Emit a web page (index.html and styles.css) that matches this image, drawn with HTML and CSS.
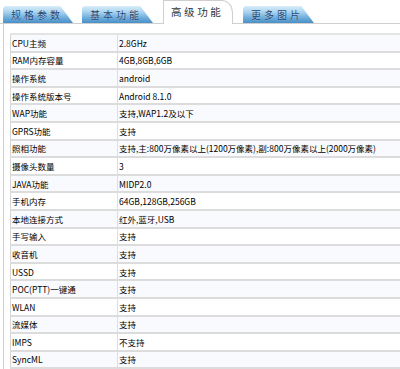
FILE: index.html
```html
<!DOCTYPE html>
<html lang="zh-CN">
<head>
<meta charset="utf-8">
<title>高级功能</title>
<link rel="stylesheet" href="styles.css">
</head>
<body>
<div class="tabs">
  <div class="tab tab-blue tab-w1">规格参数</div>
  <div class="tab tab-blue tab-w2">基本功能</div>
  <div class="tab tab-active">高级功能</div>
  <div class="tab tab-blue tab-w4">更多图片</div>
</div>
<div class="panel">
  <table class="spec">
    <tr><td class="k">CPU主频</td><td>2.8GHz</td></tr>
    <tr><td class="k">RAM内存容量</td><td>4GB,8GB,6GB</td></tr>
    <tr><td class="k">操作系统</td><td>android</td></tr>
    <tr><td class="k">操作系统版本号</td><td>Android 8.1.0</td></tr>
    <tr><td class="k">WAP功能</td><td>支持,WAP1.2及以下</td></tr>
    <tr><td class="k">GPRS功能</td><td>支持</td></tr>
    <tr><td class="k">照相功能</td><td>支持,主:800万像素以上(1200万像素),副:800万像素以上(2000万像素)</td></tr>
    <tr><td class="k">摄像头数量</td><td>3</td></tr>
    <tr><td class="k">JAVA功能</td><td>MIDP2.0</td></tr>
    <tr><td class="k">手机内存</td><td>64GB,128GB,256GB</td></tr>
    <tr><td class="k">本地连接方式</td><td>红外,蓝牙,USB</td></tr>
    <tr><td class="k">手写输入</td><td>支持</td></tr>
    <tr><td class="k">收音机</td><td>支持</td></tr>
    <tr><td class="k">USSD</td><td>支持</td></tr>
    <tr><td class="k">POC(PTT)一键通</td><td>支持</td></tr>
    <tr><td class="k">WLAN</td><td>支持</td></tr>
    <tr><td class="k">流媒体</td><td>支持</td></tr>
    <tr><td class="k">IMPS</td><td>不支持</td></tr>
    <tr><td class="k">SyncML</td><td>支持</td></tr>
  </table>
</div>
</body>
</html>
```
FILE: styles.css
```css
html, body {
  margin: 0;
  padding: 0;
  background: #fff;
  overflow: hidden;
}
body {
  width: 400px;
  height: 369px;
  font-family: "Noto Sans CJK SC", "Liberation Sans", sans-serif;
  color: #000;
}
.tabs {
  display: flex;
  align-items: flex-end;
  height: 23px;
  padding-left: 3px;
  border-bottom: 1px solid #cfcfcf;
}
.tab {
  box-sizing: border-box;
  display: flex;
  align-items: center;
  justify-content: flex-start;
  font-size: 10px;
  letter-spacing: 3px;
  white-space: nowrap;
}
.tab-blue {
  height: 17px;
  padding-left: 8px;
  color: #23446f;
  background: linear-gradient(#d9edf9 0%, #a9d3ef 35%, #6cacdc 70%, #4a8fc6 100%);
  border-top-left-radius: 3px;
  clip-path: polygon(0 0, 82% 0, 100% 100%, 0 100%);
  text-shadow: 0 0 1px rgba(255,255,255,0.6);
}
.tab-w1 { width: 70px; margin-right: 9px; }
.tab-w2 { width: 71px; margin-right: 10px; }
.tab-w4 { width: 71px; margin-left: 10px; }
.tab-active {
  width: 70px;
  height: 24px;
  margin-bottom: -1px;
  padding-left: 7px;
  padding-bottom: 3px;
  background: #fff;
  color: #333;
  border: 1px solid #cfcfcf;
  border-bottom: none;
  border-top-right-radius: 11px 13px;
  font-size: 10.5px;
  letter-spacing: 2.6px;
}
.panel {
  border-left: 1px solid #cfcfcf;
  margin-left: 3px;
  padding: 9px 0 0 6px;
  height: 340px;
}
.spec {
  border-collapse: collapse;
  width: 390px;
  font-size: 8.5px;
  border-top: 2px solid #e4e4e4;
  border-left: 1px solid #d6d6d6;
}
.spec tr {
  height: 17.6px;
}
.spec tr:nth-child(odd) {
  background: #f9fafd;
}
.spec td {
  box-sizing: border-box;
  padding: 0 0 0 1px;
  border-bottom: 2px solid #dcdcdc;
  white-space: nowrap;
  vertical-align: middle;
  line-height: 12px;
}
.spec td.k {
  width: 107px;
  border-right: 1px solid #dedede;
}
```
